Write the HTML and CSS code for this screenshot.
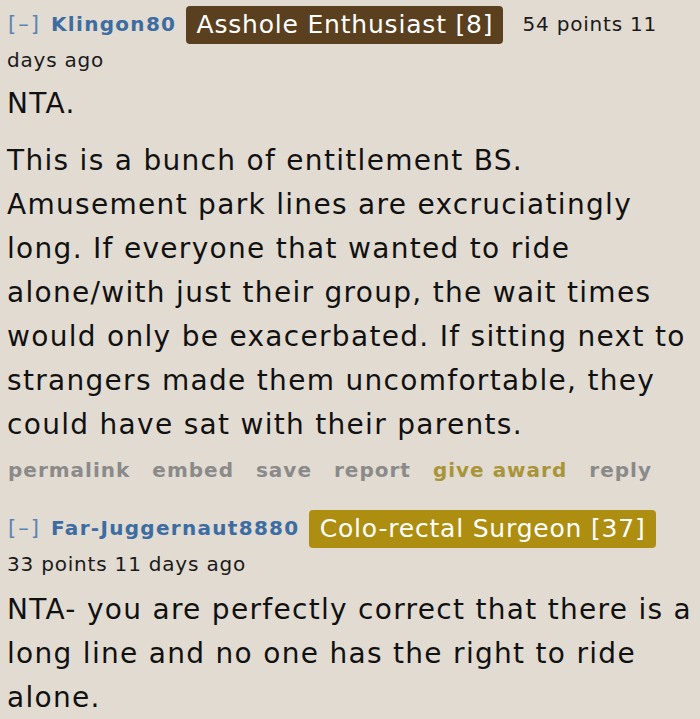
FILE: index.html
```html
<!DOCTYPE html>
<html>
<head>
<meta charset="utf-8">
<link rel="stylesheet" href="styles.css">
</head>
<body>
<div class="comment">
  <p class="tagline"><a class="expand">[–]</a> <a class="author">Klingon80</a> <span class="flair flair-brown">Asshole Enthusiast [8]</span> <span class="score">54 points</span> <span class="time">11 days ago</span></p>
  <div class="md">
    <p>NTA.</p>
    <p>This is a bunch of entitlement BS. Amusement park lines are excruciatingly long. If everyone that wanted to ride alone/with just their group, the wait times would only be exacerbated. If sitting next to strangers made them uncomfortable, they could have sat with their parents.</p>
  </div>
  <ul class="buttons">
    <li>permalink</li>
    <li>embed</li>
    <li>save</li>
    <li>report</li>
    <li class="award">give award</li>
    <li>reply</li>
  </ul>
</div>
<div class="comment">
  <p class="tagline"><a class="expand">[–]</a> <a class="author">Far-Juggernaut8880</a> <span class="flair flair-gold">Colo-rectal Surgeon [37]</span> <span class="score">33 points</span> <span class="time">11 days ago</span></p>
  <div class="md">
    <p>NTA- you are perfectly correct that there is a long line and no one has the right to ride alone.</p>
  </div>
</div>
</body>
</html>
```

FILE: styles.css
```css
html, body {
  margin: 0;
  padding: 0;
  background: #e2dbd1;
}
body {
  font-family: "DejaVu Sans", Verdana, sans-serif;
  color: #111;
  padding: 0 3px 0 7px;
}
.comment + .comment {
  margin-top: 20px;
}
.tagline {
  margin: 0;
  font-size: 20px;
  line-height: 32px;
  padding-top: 6px;
  letter-spacing: 0.8px;
}
.expand {
  color: #5a84b4;
  margin-left: 1px;
  margin-right: 3px;
  letter-spacing: 2px;
  font-size: 21px;
}
.author {
  color: #3d6ca2;
  font-weight: bold;
  letter-spacing: 1.3px;
}
.flair {
  display: inline-block;
  font-size: 25px;
  line-height: 38px;
  padding: 0 10px 0 11px;
  border-radius: 4px;
  color: #fff;
  margin: 0 12px 0 2px;
  vertical-align: -2px;
  letter-spacing: 0.8px;
}
.flair-brown { background: #5a401f; }
.flair-gold { background: #ae8e10; }
.score, .time { color: #1a1a1a; }
.md {
  font-size: 28px;
  line-height: 44px;
  letter-spacing: 1.3px;
  padding-top: 6px;
}
.comment + .comment .md {
  padding-top: 8px;
}
.md p {
  margin: 0 0 13px;
}
.buttons {
  list-style: none;
  margin: -4px 0 0;
  padding: 0 0 0 1px;
  display: flex;
  gap: 22px;
  font-size: 20px;
  font-weight: bold;
  color: #8a8a8a;
  line-height: 28px;
  letter-spacing: 1px;
}
.buttons .award { color: #a8953a; }
```
